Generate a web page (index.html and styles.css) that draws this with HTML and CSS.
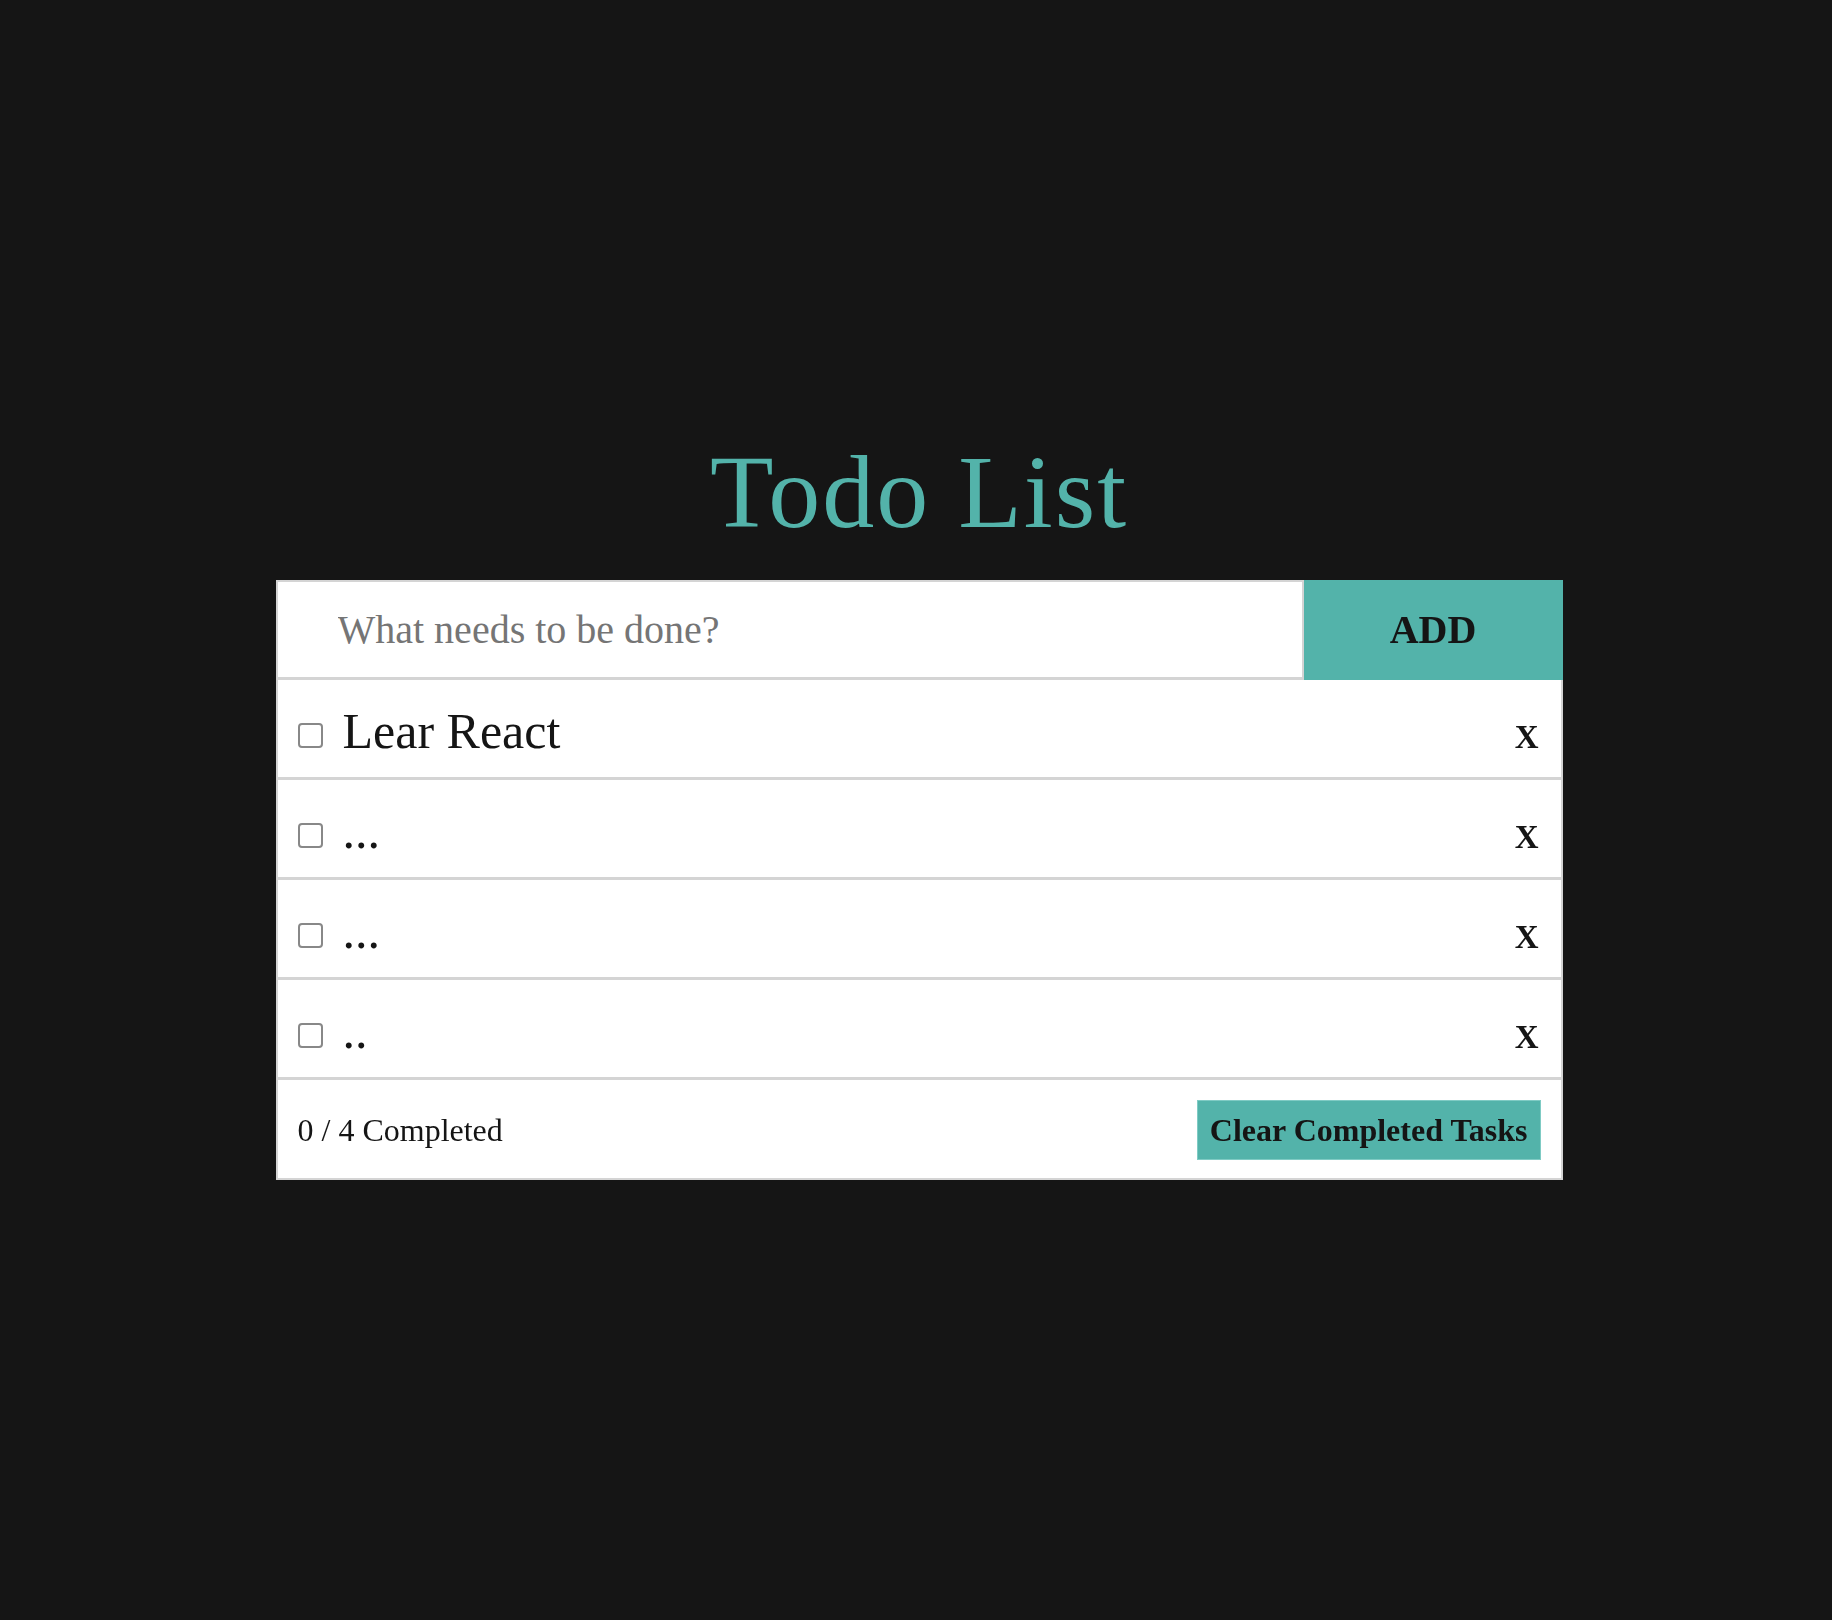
FILE: index.html
```html
<!DOCTYPE html>
<html lang="en">
<head>
<meta charset="utf-8">
<title>Todo List</title>
<link rel="stylesheet" href="styles.css">
</head>
<body>
<main class="app">
  <h1 class="title">Todo List</h1>
  <section class="card">
    <form class="add-row">
      <input class="new-todo" type="text" placeholder="What needs to be done?" autofocus>
      <button class="add-btn" type="button">ADD</button>
    </form>
    <ul class="todo-list">
      <li class="todo"><input class="check" type="checkbox"><span class="todo-text">Lear React</span><button class="remove" type="button">X</button></li>
      <li class="todo"><input class="check" type="checkbox"><span class="todo-text">...</span><button class="remove" type="button">X</button></li>
      <li class="todo"><input class="check" type="checkbox"><span class="todo-text">...</span><button class="remove" type="button">X</button></li>
      <li class="todo"><input class="check" type="checkbox"><span class="todo-text">..</span><button class="remove" type="button">X</button></li>
    </ul>
    <footer class="footer">
      <span class="count">0 / 4 Completed</span>
      <button class="clear-btn" type="button">Clear Completed Tasks</button>
    </footer>
  </section>
</main>
</body>
</html>
```
FILE: styles.css
```css
html, body {
  margin: 0;
  padding: 0;
  background: #151515;
}

body {
  font-family: "Liberation Serif", "Times New Roman", serif;
  color: #151515;
}

.app {
  width: 1287px;
  margin: 0 auto;
  padding-top: 432px;
  position: relative;
  left: 3px;
}

.title {
  margin: 0 0 28px;
  text-align: center;
  font-size: 104px;
  font-weight: normal;
  line-height: 1.15;
  letter-spacing: 2px;
  color: #53b3aa;
}

.card {
  background: #fff;
}

.add-row {
  display: flex;
  height: 100px;
  margin: 0;
}

.new-todo {
  flex: 1;
  min-width: 0;
  box-sizing: border-box;
  height: 100px;
  margin: 0;
  border: 2px solid #d4d4d4;
  border-bottom-width: 3px;
  padding: 0 0 0 60px;
  font-family: "Liberation Serif", "Times New Roman", serif;
  font-size: 40px;
  color: #151515;
  background: #fff;
  outline: none;
}

.new-todo::placeholder {
  color: #757575;
}

.add-btn {
  width: 259px;
  height: 100px;
  margin: 0;
  border: none;
  background: #53b3aa;
  color: #151515;
  font-family: "Liberation Serif", "Times New Roman", serif;
  font-size: 40px;
  font-weight: bold;
  padding: 0;
}

.todo-list {
  list-style: none;
  margin: 0;
  padding: 0;
}

.todo {
  display: flex;
  align-items: baseline;
  box-sizing: border-box;
  height: 100px;
  padding: 22px 22px 0 20px;
  border-left: 2px solid #d4d4d4;
  border-right: 2px solid #d4d4d4;
  border-bottom: 3px solid #d4d4d4;
}

.check {
  appearance: none;
  -webkit-appearance: none;
  box-sizing: border-box;
  width: 25px;
  height: 25px;
  margin: 0 20px 1px 0;
  border: 2px solid #888;
  border-radius: 4px;
  background: #fff;
}

.todo-text {
  font-size: 50px;
  line-height: normal;
}

.remove {
  margin-left: auto;
  border: none;
  background: none;
  padding: 0;
  font-family: "Liberation Serif", "Times New Roman", serif;
  font-size: 33px;
  font-weight: bold;
  color: #151515;
}

.footer {
  display: flex;
  align-items: center;
  justify-content: space-between;
  box-sizing: border-box;
  height: 100px;
  padding: 3px 20px 0 20px;
  border-left: 2px solid #d4d4d4;
  border-right: 2px solid #d4d4d4;
  border-bottom: 2px solid #d4d4d4;
}

.count {
  font-size: 32px;
}

.clear-btn {
  margin: 0;
  padding: 11px 12px;
  border: 1px solid #7fcbc4;
  background: #53b3aa;
  color: #151515;
  font-family: "Liberation Serif", "Times New Roman", serif;
  font-size: 32px;
  font-weight: bold;
  line-height: 1.15;
}
```
